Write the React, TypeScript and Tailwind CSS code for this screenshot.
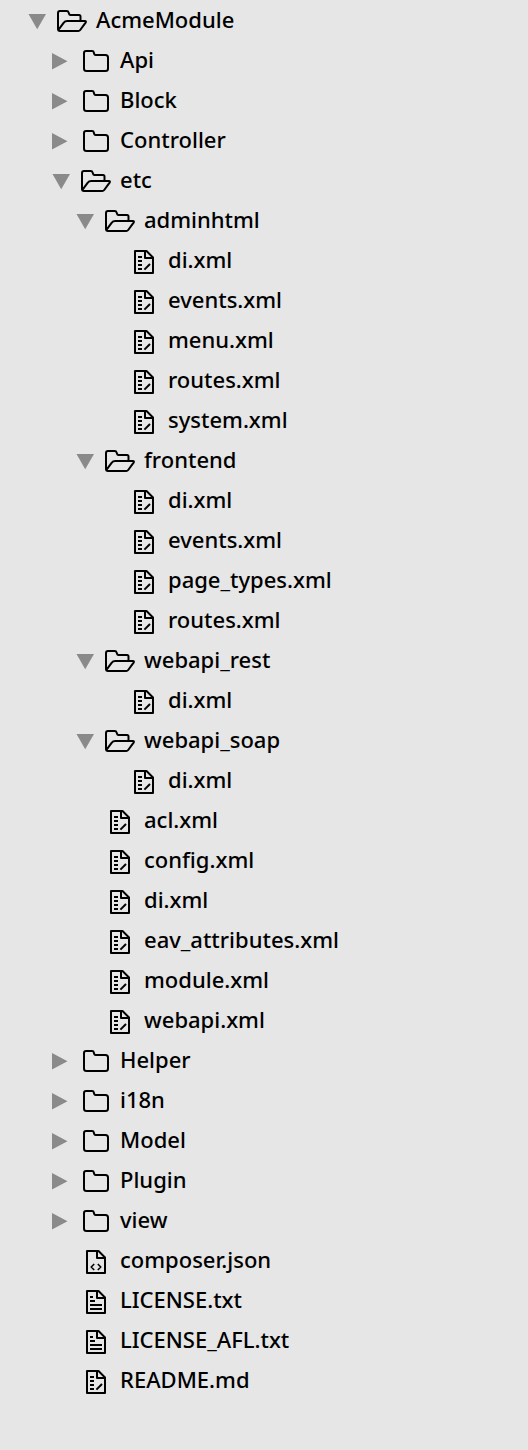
import { useState } from "react";

type FileKind = "code" | "json" | "text";

type TreeNode = {
  name: string;
  kind: "folder" | FileKind;
  open?: boolean;
  children?: TreeNode[];
};

const folder = (name: string, children: TreeNode[] = []): TreeNode => ({
  name,
  kind: "folder",
  open: children.length > 0,
  children,
});

const file = (name: string, kind: FileKind = "code"): TreeNode => ({ name, kind });

const tree: TreeNode[] = [
  folder("AcmeModule", [
    folder("Api"),
    folder("Block"),
    folder("Controller"),
    folder("etc", [
      folder("adminhtml", [
        file("di.xml"),
        file("events.xml"),
        file("menu.xml"),
        file("routes.xml"),
        file("system.xml"),
      ]),
      folder("frontend", [
        file("di.xml"),
        file("events.xml"),
        file("page_types.xml"),
        file("routes.xml"),
      ]),
      folder("webapi_rest", [file("di.xml")]),
      folder("webapi_soap", [file("di.xml")]),
      file("acl.xml"),
      file("config.xml"),
      file("di.xml"),
      file("eav_attributes.xml"),
      file("module.xml"),
      file("webapi.xml"),
    ]),
    folder("Helper"),
    folder("i18n"),
    folder("Model"),
    folder("Plugin"),
    folder("view"),
    file("composer.json", "json"),
    file("LICENSE.txt", "text"),
    file("LICENSE_AFL.txt", "text"),
    file("README.md"),
  ]),
];

function Arrow({ open }: { open: boolean }) {
  return (
    <svg viewBox="0 0 22 32" className="h-8 w-[22px] shrink-0 fill-[#8a8a8a]" aria-hidden="true">
      <path d={open ? "M2.5 10h17.5L11.2 25.3Z" : "M2 9v16.6L17.5 17.3Z"} />
    </svg>
  );
}

function FolderIcon({ open }: { open: boolean }) {
  return (
    <svg
      viewBox="0 0 32 32"
      className="size-8 shrink-0 fill-none stroke-black stroke-2"
      strokeLinejoin="round"
      strokeLinecap="round"
      aria-hidden="true"
    >
      {open ? (
        <>
          <path d="M24.5 16.5V12.5Q24.5 11 23 11H14.5Q13.3 11 13 9.8L12.6 8.4Q12.2 7 10.8 7H4Q2 7 2 9V25Q2 27 4 27H22.2Q23.5 27 24.2 26L29.6 18.6Q30.6 17 28.8 17H11.3Q9 17 7.6 18.8L2.6 25.6" />
        </>
      ) : (
        <path d="M6 7H12Q13.6 7 13.9 8.6L14.1 9.8Q14.4 11 15.6 11H25.5Q28 11 28 13.5V24.5Q28 27 25.5 27H6.5Q4 27 4 24.5V9Q4 7 6 7Z" />
      )}
    </svg>
  );
}

function FileIcon({ kind }: { kind: FileKind }) {
  return (
    <svg
      viewBox="0 0 32 32"
      className="size-8 shrink-0 fill-none stroke-black stroke-2"
      strokeLinejoin="round"
      aria-hidden="true"
    >
      <path d="M7 7H18.5L25 13.5V29H7Z" />
      <path d="M17 7V14H25" />
      {kind === "code" && (
        <>
          <path d="M10 13h4M10 17h4M10 21h4M10 25h4" />
          <path d="M16.4 25.6L22 20" />
        </>
      )}
      {kind === "text" && <path d="M10 13h3M10 17h5M10 21h12M10 25h12" />}
      {kind === "json" && (
        <path className="stroke-[1.6]" d="M14.2 20L11.2 23L14.2 26M17.8 20L20.8 23L17.8 26" />
      )}
    </svg>
  );
}

const rowClass = "flex h-10 w-full items-center gap-2 text-left whitespace-nowrap";

function Label({ text }: { text: string }) {
  return <span className="pb-0.5 leading-9">{text}</span>;
}

function TreeItem({ node }: { node: TreeNode }) {
  const [open, setOpen] = useState(Boolean(node.open));

  if (node.kind !== "folder") {
    return (
      <li className={rowClass}>
        <span className="w-[22px] shrink-0" />
        <FileIcon kind={node.kind} />
        <Label text={node.name} />
      </li>
    );
  }

  return (
    <li>
      <button
        type="button"
        aria-expanded={open}
        onClick={() => setOpen(!open)}
        className={rowClass}
      >
        <Arrow open={open} />
        <FolderIcon open={open} />
        <Label text={node.name} />
      </button>
      {open && node.children && node.children.length > 0 && (
        <ul className="pl-6">
          {node.children.map((child) => (
            <TreeItem key={child.name} node={child} />
          ))}
        </ul>
      )}
    </li>
  );
}

export default function App() {
  return (
    <main className="min-h-screen bg-[#e6e6e6] pl-[26px] font-['Noto_Sans',sans-serif] text-[22px] font-medium text-black">
      <ul>
        {tree.map((node) => (
          <TreeItem key={node.name} node={node} />
        ))}
      </ul>
    </main>
  );
}
